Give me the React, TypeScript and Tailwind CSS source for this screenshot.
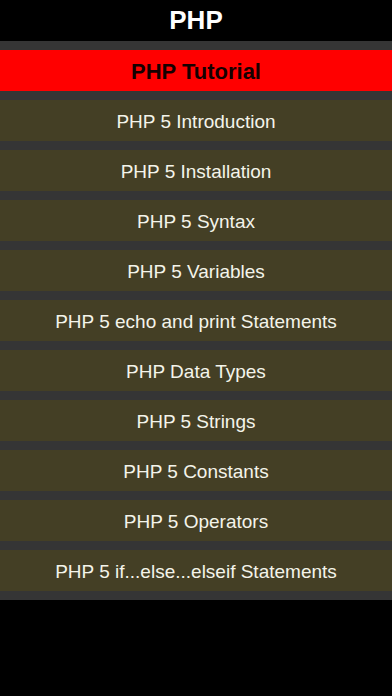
const items = [
  'PHP 5 Introduction',
  'PHP 5 Installation',
  'PHP 5 Syntax',
  'PHP 5 Variables',
  'PHP 5 echo and print Statements',
  'PHP Data Types',
  'PHP 5 Strings',
  'PHP 5 Constants',
  'PHP 5 Operators',
  'PHP 5 if...else...elseif Statements',
]

export default function App() {
  return (
    <div className="min-h-screen bg-black font-['Liberation_Sans',Arial,sans-serif]">
      <div className="h-[41px] flex items-center justify-center text-white font-bold text-[26px]">
        PHP
      </div>
      <div className="bg-[#353535] py-[9px] flex flex-col gap-[9px]">
        <div className="h-[41px] pt-[2px] bg-[#ff0000] flex items-center justify-center text-[#150000] font-bold text-[22px]">
          PHP Tutorial
        </div>
        {items.map((item) => (
          <div
            key={item}
            className="h-[41px] pt-[4px] bg-[#443f25] flex items-center justify-center text-[#f4f4ea] text-[19px]"
          >
            {item}
          </div>
        ))}
      </div>
    </div>
  )
}
